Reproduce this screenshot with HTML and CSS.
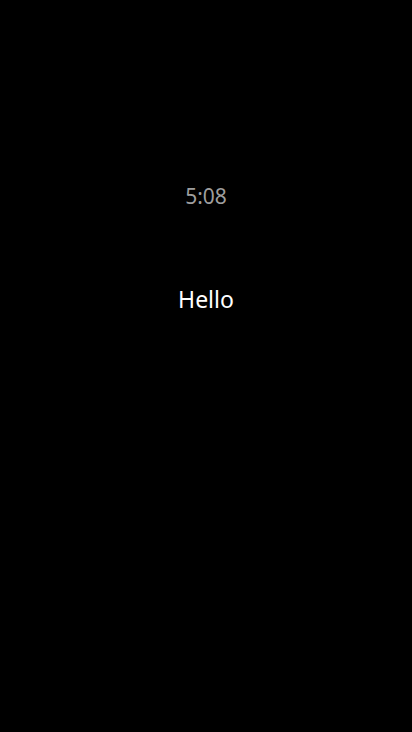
FILE: index.html
```html
<!DOCTYPE html>
<html>
<head>
<meta charset="utf-8">
<link rel="stylesheet" href="styles.css">
</head>
<body>
<main class="screen">
  <div class="time">5:08</div>
  <div class="greeting">Hello</div>
</main>
</body>
</html>
```
FILE: styles.css
```css
html, body {
  margin: 0;
  padding: 0;
  background: #000;
}
.screen {
  width: 412px;
  height: 732px;
  display: flex;
  flex-direction: column;
  align-items: center;
  padding-top: 182px;
  box-sizing: border-box;
  font-family: "Noto Sans", sans-serif;
}
.time {
  color: #9e9e9e;
  font-size: 21px;
  line-height: 28px;
}
.greeting {
  margin-top: 73px;
  color: #fff;
  font-size: 23px;
  line-height: 32px;
}
```
